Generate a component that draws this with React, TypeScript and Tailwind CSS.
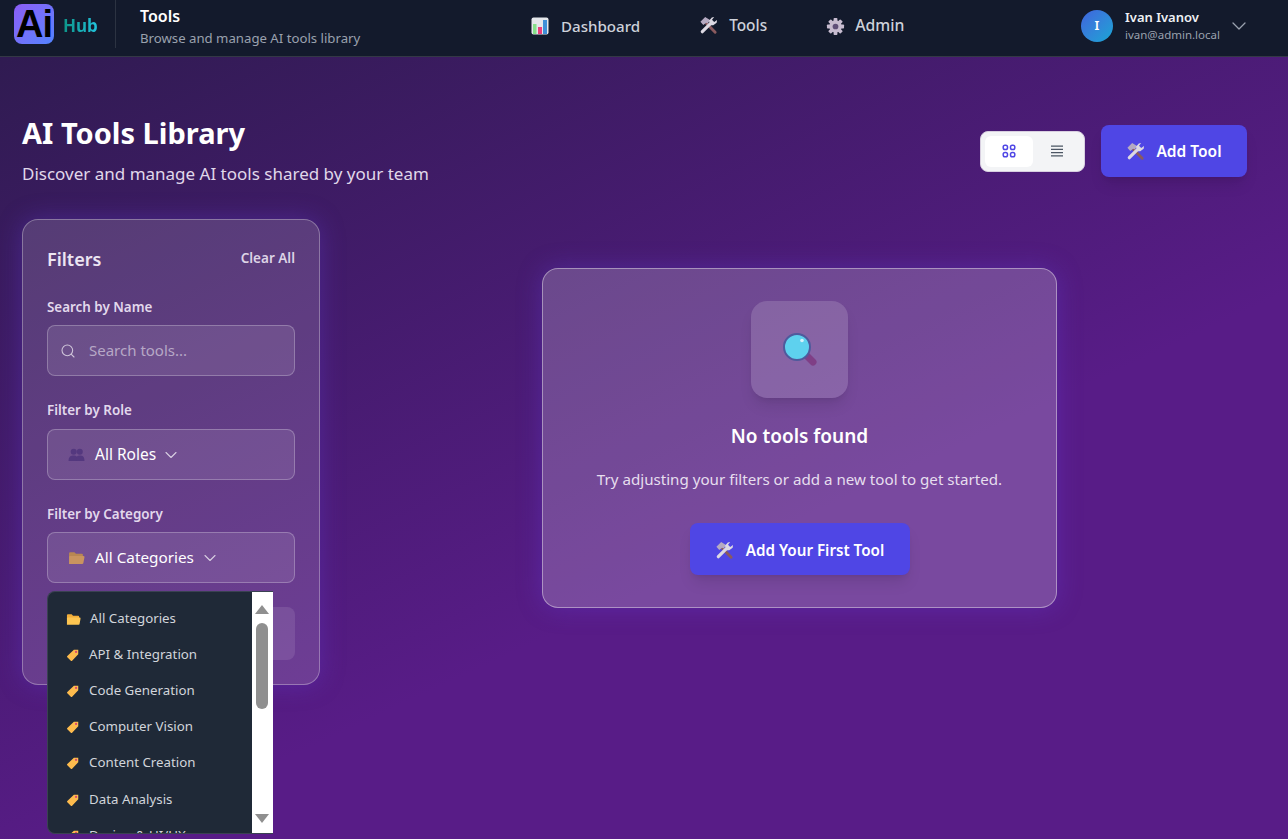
import { ChevronDown, Search } from "lucide-react";

const CATEGORIES = [
  "API & Integration",
  "Code Generation",
  "Computer Vision",
  "Content Creation",
  "Data Analysis",
  "Design & UI/UX",
];

function ToolsEmoji({ className = "" }: { className?: string }) {
  return (
    <svg viewBox="0 0 20 20" className={className}>
      <path d="M8 8 L17 17" stroke="#8a5a5e" strokeWidth="3" strokeLinecap="round" />
      <polygon points="1.5,6 6.5,1 12,4.5 9,8 7.5,7 4.5,9.5" fill="#b5aac2" />
      <path d="M3.5 16.5 L12 8" stroke="#ddd9e3" strokeWidth="3.4" strokeLinecap="round" />
      <polygon points="10.5,5 13.5,1.5 16,1 13.7,4 16,6.3 19,4.2 18.6,7 15,9.8 12,9.8" fill="#ddd9e3" />
    </svg>
  );
}

function ChartEmoji() {
  return (
    <svg viewBox="0 0 18 18" className="w-[18px] h-[18px]">
      <rect x="0.5" y="0.5" width="17" height="17" rx="2" fill="#e5e7eb" />
      <rect x="2" y="7" width="3.5" height="10" fill="#86e08a" />
      <rect x="7" y="10" width="4" height="7" fill="#ec3f7c" />
      <rect x="12" y="3" width="4" height="14" fill="#3f8fd8" />
    </svg>
  );
}

function GearEmoji() {
  return (
    <svg viewBox="0 0 20 20" className="w-[19px] h-[19px]">
      <g fill="#c7bcd0">
        <circle cx="10" cy="10" r="6.5" />
        {[0, 45, 90, 135, 180, 225, 270, 315].map((r) => (
          <rect key={r} x="8" y="1" width="4" height="4" rx="0.8" transform={`rotate(${r} 10 10)`} />
        ))}
      </g>
      <circle cx="10" cy="10" r="3" fill="#5f4f78" />
    </svg>
  );
}

function FolderEmoji({ fill = "#fdc551", back = "#f2ae3a", className = "" }: { fill?: string; back?: string; className?: string }) {
  return (
    <svg viewBox="0 0 16 14" className={className}>
      <path d="M1 3 A1 1 0 0 1 2 2 H6 L7.5 3.5 H13 A1 1 0 0 1 14 4.5 V7 H1 Z" fill={back} />
      <path d="M1 13 V6.5 A1 1 0 0 1 2 5.5 H14.5 A1 1 0 0 1 15.5 6.7 L14.5 12 A1 1 0 0 1 13.5 13 Z" fill={fill} />
    </svg>
  );
}

function TagEmoji() {
  return (
    <svg viewBox="0 0 16 16" className="w-[14px] h-[14px] shrink-0">
      <path d="M9 2 H14 V7 L7 14.5 A1 1 0 0 1 5.5 14.5 L1.5 10.5 A1 1 0 0 1 1.5 9 Z" fill="#fdbb4d" />
      <circle cx="11.5" cy="4.5" r="1.3" fill="#d9486e" />
    </svg>
  );
}

function PeopleEmoji() {
  return (
    <svg viewBox="0 0 18 16" className="w-[17px] h-[15px]">
      <g fill="#54387f">
        <circle cx="6" cy="5" r="3.2" />
        <path d="M0.5 15 C0.5 10 3 9 6 9 C9 9 10 10 10 15 Z" />
        <circle cx="12.5" cy="5" r="3.2" />
        <path d="M8.5 15 C8.5 10 10 9 12.5 9 C15.5 9 17.5 10 17.5 15 Z" />
      </g>
    </svg>
  );
}

function MagnifierEmoji() {
  return (
    <svg viewBox="0 0 36 36" className="w-9 h-9">
      <path d="M24 23 L31 30" stroke="#7f3f86" strokeWidth="7" strokeLinecap="round" />
      <circle cx="15" cy="15" r="13" fill="#5ed1ee" stroke="#4f5a9c" strokeWidth="2" />
      <circle cx="20" cy="8.5" r="1.8" fill="#d5f1fa" />
    </svg>
  );
}

function GridIcon() {
  return (
    <svg viewBox="0 0 14 14" className="w-[14px] h-[14px]" fill="none" stroke="#4f46e5" strokeWidth="1.5">
      <rect x="1.2" y="1.2" width="4.3" height="4.3" rx="1.8" />
      <rect x="8.5" y="1.2" width="4.3" height="4.3" rx="1.8" />
      <rect x="1.2" y="8.5" width="4.3" height="4.3" rx="1.8" />
      <rect x="8.5" y="8.5" width="4.3" height="4.3" rx="1.8" />
    </svg>
  );
}

function ListIcon() {
  return (
    <svg viewBox="0 0 14 14" className="w-[14px] h-[14px]" stroke="#4b5563" strokeWidth="1.3">
      <path d="M1 2.2 H13 M1 5.4 H13 M1 8.6 H13 M1 11.8 H13" />
    </svg>
  );
}

function FilterLabel({ children }: { children: string }) {
  return <label className="block text-[13.4px] leading-5 font-semibold text-[#e2d8ec]">{children}</label>;
}

export default function App() {
  return (
    <div
      className="h-screen overflow-hidden flex flex-col bg-[linear-gradient(155deg,#2d1b4e_0%,#581c87_62%)] text-white"
      style={{ fontFamily: '"Noto Sans", "Open Sans", sans-serif' }}
    >
      {/* Top bar */}
      <header className="h-[57px] shrink-0 bg-[#131a2c] border-b border-[#333845] flex items-center relative">
        <div className="flex items-center pl-[14px] w-[116px] border-r border-[#2c3342] h-12 self-start">
          <div className="w-10 h-10 mt-[4px] self-start rounded-lg bg-gradient-to-br from-[#8b5cf6] to-[#4f83ff] flex items-center justify-center overflow-hidden">
            <span className="text-[38px] leading-none font-bold text-black tracking-tight" style={{ fontFamily: '"Liberation Sans", sans-serif' }}>
              Ai
            </span>
          </div>
          <span className="ml-[9px] mt-[4px] text-[17px] font-bold bg-gradient-to-r from-[#0d9488] to-[#22c4de] bg-clip-text text-transparent">Hub</span>
        </div>
        <div className="ml-[24px] self-start pt-[4px]">
          <div className="text-[16px] leading-6 font-semibold text-white">Tools</div>
          <div className="text-[13.2px] leading-[18px] mt-[1px] text-[#9aa1ae]">Browse and manage AI tools library</div>
        </div>
        <nav className="absolute left-[531px] top-0 h-[52px] flex items-center gap-[59px]">
          <a className="flex items-center gap-[12px] text-[15.1px] font-medium text-[#cdd1da]"><ChartEmoji />Dashboard</a>
          <a className="flex items-center gap-[11px] text-[15.4px] font-medium text-[#cdd1da]"><ToolsEmoji className="w-[19px] h-[19px]" />Tools</a>
          <a className="flex items-center gap-[10px] text-[15.8px] font-medium text-[#cdd1da]"><GearEmoji />Admin</a>
        </nav>
        <div className="ml-auto mr-[37px] flex items-center self-start pt-2">
          <div className="w-8 h-8 rounded-full bg-gradient-to-br from-[#3f62dd] to-[#14a5d4] flex items-center justify-center text-[13px] font-semibold">I</div>
          <div className="ml-[12px]">
            <div className="text-[13px] leading-[18px] font-semibold text-[#eef0f4]">Ivan Ivanov</div>
            <div className="text-[11.5px] leading-4 mt-[1px] text-[#9aa1ae]">ivan@admin.local</div>
          </div>
          <ChevronDown className="ml-[7px] w-6 h-6 text-[#9aa1ae]" strokeWidth={1.3} />
        </div>
      </header>

      <main className="flex-1 pl-[22px] pr-[41px] pt-[68px] min-h-0">
        {/* Page heading */}
        <div className="flex justify-between items-start">
          <div>
            <h1 className="text-[29px] leading-[20px] -mt-[2px] font-bold text-white">AI Tools Library</h1>
            <p className="text-[17px] leading-6 mt-[19px] text-[#e0d8ea]">Discover and manage AI tools shared by your team</p>
          </div>
          <div className="flex items-center gap-4">
            <div className="w-[105px] h-[41px] rounded-lg bg-[#f3f4f6] border border-[#d8cfe0] p-[4px] flex">
              <button className="w-[48px] rounded-md bg-white flex items-center justify-center">
                <GridIcon />
              </button>
              <button className="flex-1 flex items-center justify-center">
                <ListIcon />
              </button>
            </div>
            <button className="w-[146px] h-[52px] pt-[1px] rounded-lg bg-[#4f46e5] shadow-lg flex items-center justify-center gap-[11px] text-[15.5px] font-semibold text-white">
              <ToolsEmoji className="w-[19px] h-[19px]" />
              Add Tool
            </button>
          </div>
        </div>

        <div className="flex gap-8 items-start mt-[33px]">
          {/* Filters */}
          <aside className="relative w-[298px] h-[466px] shrink-0 rounded-2xl border border-white/30 bg-white/15 p-6 shadow-[0_0_24px_rgba(99,62,220,0.35)]">
            <div className="flex justify-between items-center h-[30px]">
              <h2 className="text-[18px] font-semibold text-[#ece5f2]">Filters</h2>
              <button className="text-[13.5px] font-semibold text-[#ddd3e6] -mt-[1px]">Clear All</button>
            </div>
            <div className="mt-[23px]">
              <FilterLabel>Search by Name</FilterLabel>
              <div className="mt-2 h-[51px] rounded-lg border border-white/25 bg-white/10 flex items-center pl-[12px]">
                <Search className="w-4 h-4 text-[#cfc4d9]" strokeWidth={1.6} />
                <span className="ml-[13px] text-[15px] text-[#b7a8c6]">Search tools...</span>
              </div>
            </div>
            <div className="mt-[24px]">
              <FilterLabel>Filter by Role</FilterLabel>
              <div className="mt-[9px] h-[51px] rounded-lg border border-white/25 bg-white/10 flex items-center pl-[20px]">
                <PeopleEmoji />
                <span className="ml-[10px] text-[15.5px] text-white">All Roles</span>
                <ChevronDown className="ml-[5px] w-5 h-5 text-[#d8cfe2]" strokeWidth={1.3} />
              </div>
            </div>
            <div className="mt-[24px]">
              <FilterLabel>Filter by Category</FilterLabel>
              <div className="mt-2 h-[51px] rounded-lg border border-white/25 bg-white/10 flex items-center pl-[20px]">
                <FolderEmoji fill="#c9945f" back="#b98752" className="w-[17px] h-[15px]" />
                <span className="ml-[10px] text-[15.3px] text-white">All Categories</span>
                <ChevronDown className="ml-[6px] w-5 h-5 text-[#d8cfe2]" strokeWidth={1.3} />
              </div>
            </div>
            <div className="mt-[24px] h-[53px] rounded-lg bg-white/10" />

            {/* Open category list */}
            <div className="absolute left-[24px] top-[371px] w-[226px] h-[243px] z-10 flex rounded-l-lg overflow-hidden border-l border-y border-[#3a4252] bg-[#1f2937]">
              <ul className="w-[204px] overflow-hidden pt-[8.5px] shrink-0">
                <li className="h-[36.2px] flex items-center pl-[18px] gap-[9px] text-[13.3px] text-[#d1d5db]">
                  <FolderEmoji className="w-[15px] h-[14px] shrink-0" />
                  All Categories
                </li>
                {CATEGORIES.map((c) => (
                  <li key={c} className="h-[36.2px] flex items-center pl-[18px] gap-[9px] text-[13.3px] text-[#d1d5db] whitespace-nowrap">
                    <TagEmoji />
                    {c}
                  </li>
                ))}
              </ul>
              <div className="flex-1 bg-white flex flex-col items-center pt-[13px] pr-[1px] relative">
                <div className="w-0 h-0 border-x-[7px] border-x-transparent border-b-[9px] border-b-[#8f8f8f]" />
                <div className="mt-[9px] w-[12px] h-[86px] rounded-md bg-[#8f8f8f]" />
                <div className="absolute bottom-[10px] w-0 h-0 border-x-[7px] border-x-transparent border-t-[9px] border-t-[#8f8f8f]" />
              </div>
            </div>
          </aside>

          {/* Empty state */}
          <section className="flex-1 flex justify-center pt-[49px]">
            <div className="w-[515px] h-[340px] rounded-2xl border border-white/40 bg-white/20 shadow-[0_0_24px_rgba(99,62,220,0.35)] flex flex-col items-center pt-[32px]">
              <div className="w-[97px] h-[97px] rounded-2xl bg-white/15 shadow-lg flex items-center justify-center">
                <MagnifierEmoji />
              </div>
              <h3 className="mt-[24px] text-[19px] leading-7 font-semibold text-white">No tools found</h3>
              <p className="mt-[17px] text-[15.15px] leading-6 text-[#e6deee]">Try adjusting your filters or add a new tool to get started.</p>
              <button className="mt-[32px] w-[220px] h-[52px] pt-[2px] rounded-lg bg-[#4f46e5] shadow-lg flex items-center justify-center gap-[12px] text-[15.2px] font-semibold text-white">
                <ToolsEmoji className="w-[19px] h-[19px]" />
                Add Your First Tool
              </button>
            </div>
          </section>
        </div>
      </main>
    </div>
  );
}
